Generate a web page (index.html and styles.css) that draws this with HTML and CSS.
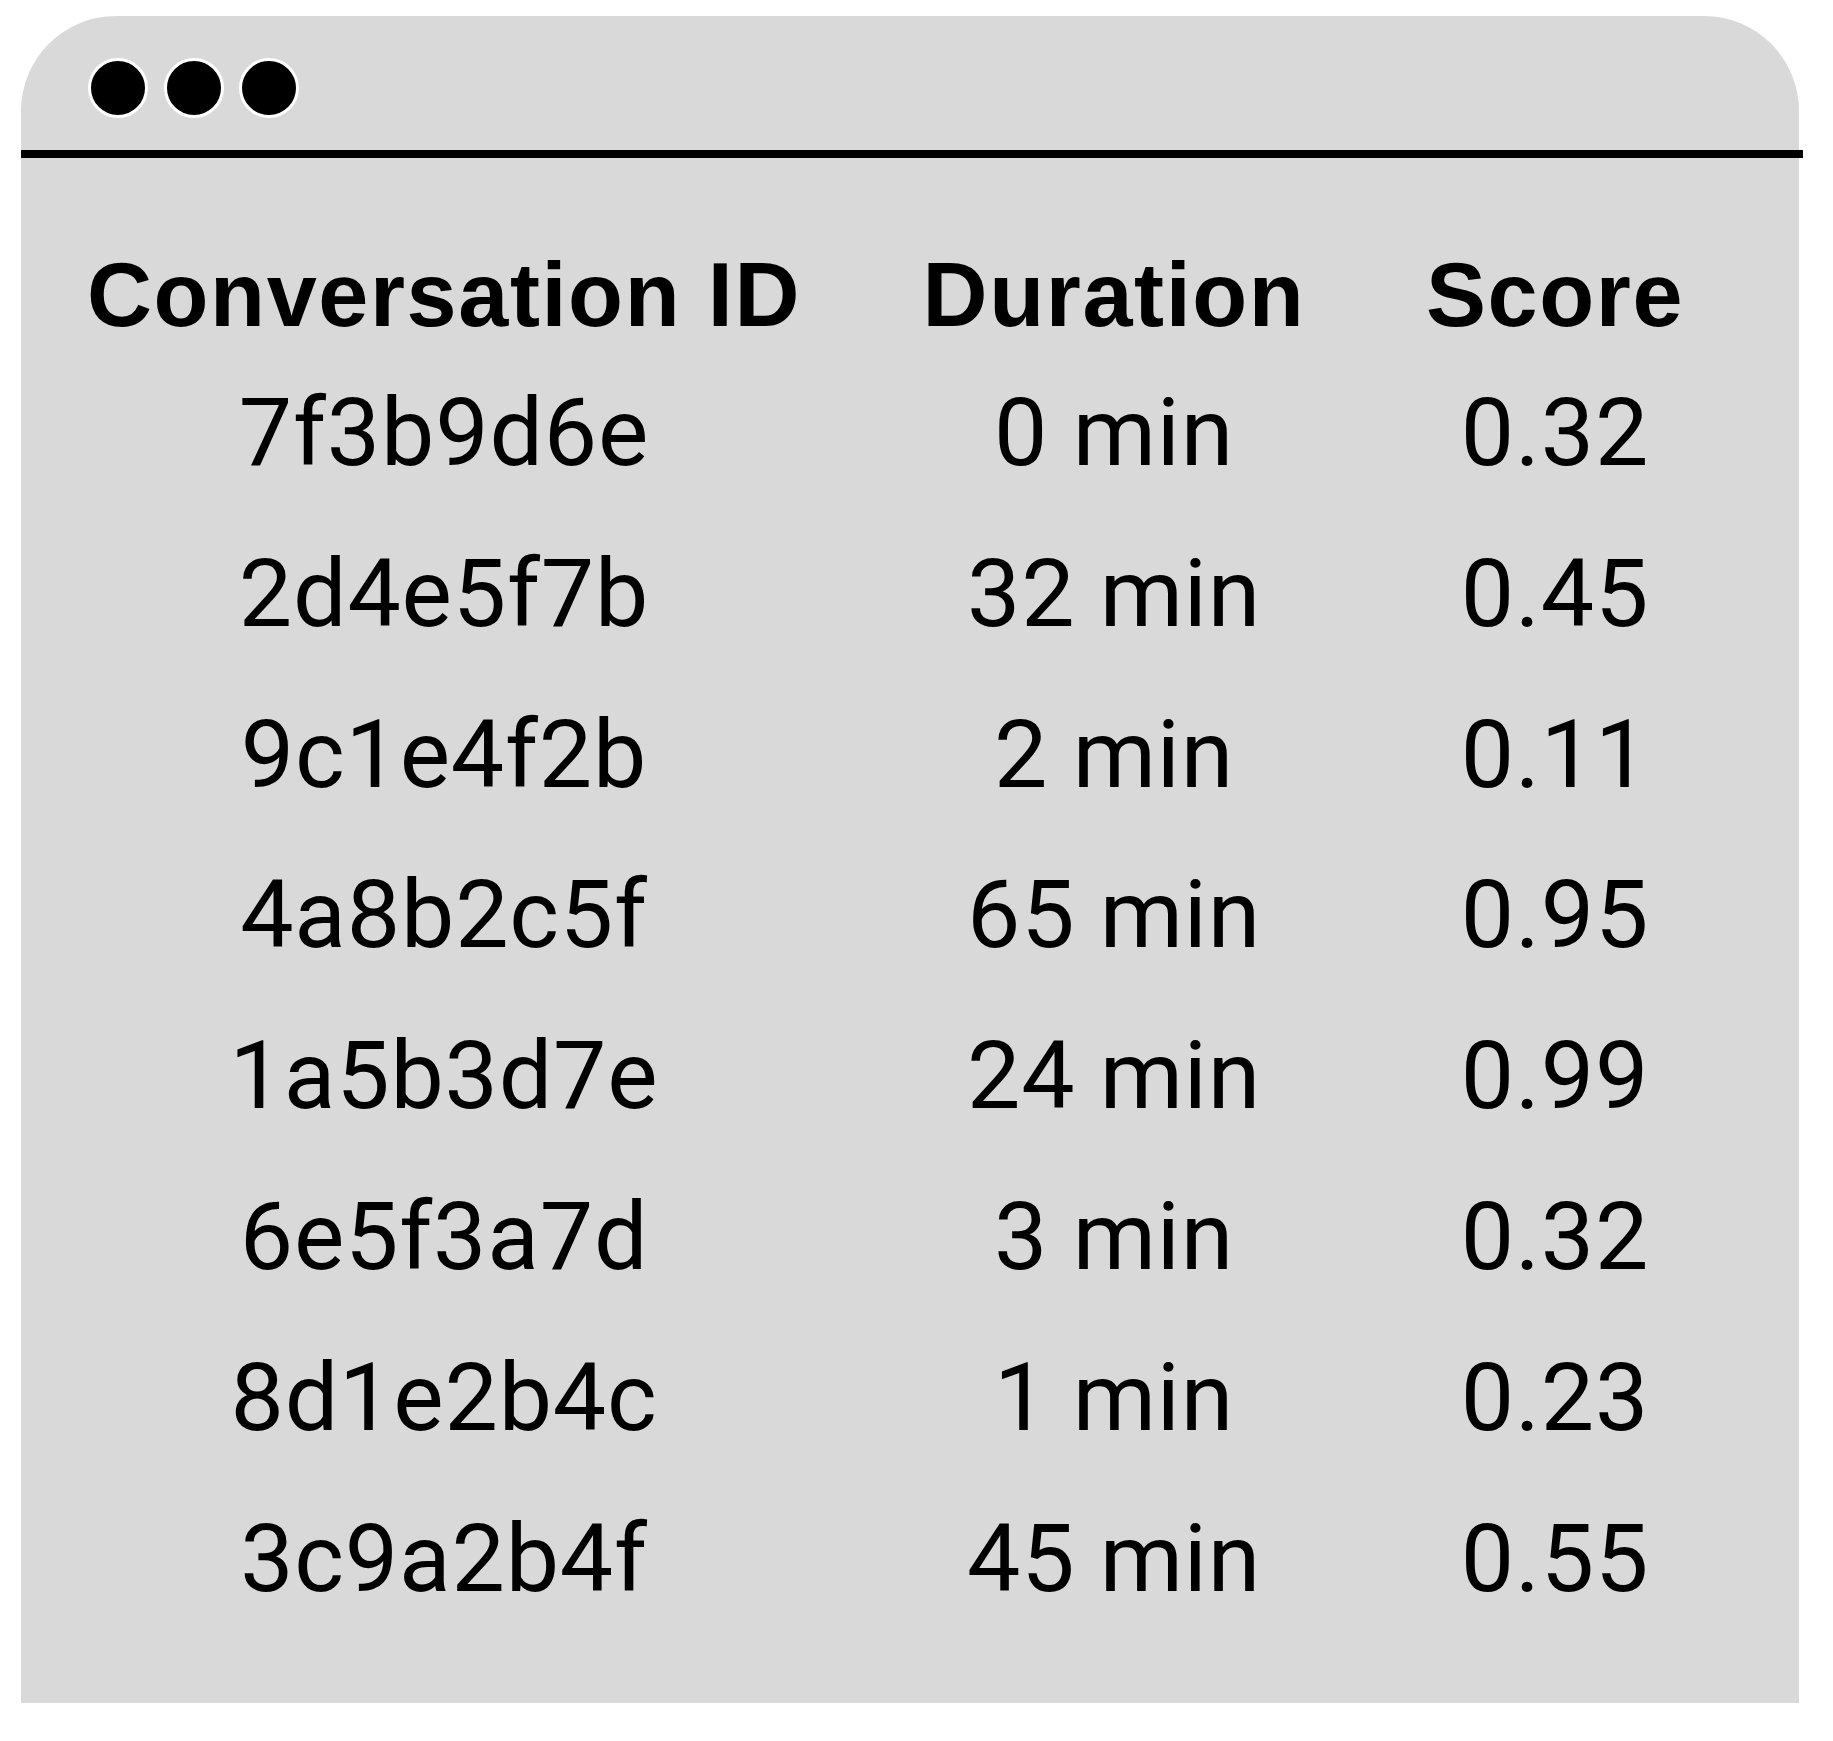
FILE: index.html
```html
<!DOCTYPE html>
<html lang="en">
<head>
<meta charset="utf-8">
<title>Conversations</title>
<link rel="stylesheet" href="styles.css">
</head>
<body>
  <div class="window">
    <div class="titlebar">
      <span class="dot"></span>
      <span class="dot"></span>
      <span class="dot"></span>
    </div>
    <div class="rule"></div>
    <div class="table">
      <div class="head">Conversation ID</div>
      <div class="head">Duration</div>
      <div class="head">Score</div>

      <div class="cell">7f3b9d6e</div>
      <div class="cell">0 min</div>
      <div class="cell">0.32</div>

      <div class="cell">2d4e5f7b</div>
      <div class="cell">32 min</div>
      <div class="cell">0.45</div>

      <div class="cell">9c1e4f2b</div>
      <div class="cell">2 min</div>
      <div class="cell">0.11</div>

      <div class="cell">4a8b2c5f</div>
      <div class="cell">65 min</div>
      <div class="cell">0.95</div>

      <div class="cell">1a5b3d7e</div>
      <div class="cell">24 min</div>
      <div class="cell">0.99</div>

      <div class="cell">6e5f3a7d</div>
      <div class="cell">3 min</div>
      <div class="cell">0.32</div>

      <div class="cell">8d1e2b4c</div>
      <div class="cell">1 min</div>
      <div class="cell">0.23</div>

      <div class="cell">3c9a2b4f</div>
      <div class="cell">45 min</div>
      <div class="cell">0.55</div>
    </div>
  </div>
</body>
</html>
```

FILE: styles.css
```css
html, body {
  margin: 0;
  padding: 0;
  background: #ffffff;
}

body {
  padding: 16px 0 0 21px;
}

.window {
  width: 1778px;
  height: 1687px;
  background: #d9d9d9;
  border-radius: 95px 95px 0 0;
  box-sizing: border-box;
}

.titlebar {
  height: 134px;
  box-sizing: border-box;
  padding: 42px 0 0 67px;
  display: flex;
  gap: 15.5px;
  align-items: flex-start;
}

.dot {
  width: 54px;
  height: 54px;
  border-radius: 50%;
  background: #000;
  border: 3px solid #fff;
  flex: none;
}

.rule {
  width: calc(100% + 4px);
  height: 8px;
  background: #000;
}

.table {
  display: grid;
  grid-template-columns: 728px 612px 270px;
  padding: 79px 0 0 59px;
  color: #000;
}

.head {
  font-family: "Liberation Sans", Arial, sans-serif;
  font-weight: 700;
  font-size: 90px;
  letter-spacing: 1.6px;
  line-height: 116px;
  text-align: center;
  white-space: nowrap;
}

.cell {
  font-family: Roboto, "Liberation Sans", sans-serif;
  font-weight: 400;
  font-size: 95px;
  letter-spacing: 0.8px;
  line-height: 160.8px;
  text-align: center;
  white-space: nowrap;
}
```
